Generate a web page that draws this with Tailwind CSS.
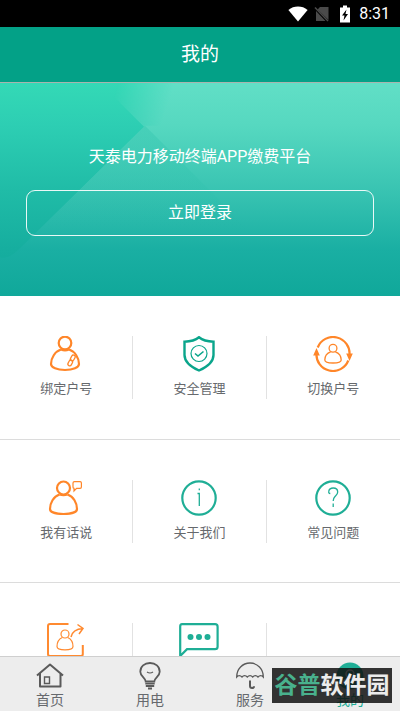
<!DOCTYPE html>
<html lang="zh-CN">
<head>
<meta charset="utf-8">
<meta name="viewport" content="width=device-width, initial-scale=1">
<title>我的</title>
<script src="https://cdn.jsdelivr.net/npm/@tailwindcss/browser@4"></script>
</head>
<body class="h-screen flex flex-col overflow-hidden bg-white font-[Roboto,'Noto_Sans_CJK_SC',sans-serif] text-[#66696d]">

<div class="h-[27px] shrink-0 bg-black text-white flex items-center justify-end pr-[10px]">
  <svg class="w-5 h-4 mr-[6px]" viewBox="0 0 20 16" fill="#fff"><path d="M10 15.500 0.400 4Q4.600.6 10 .6T19.600 4Z"/></svg>
  <svg class="w-4 h-4 mr-[9px]" viewBox="0 0 16 16"><path d="M6 1h8.500v13L3.500 3.500ZM2 5l9.500 10H2Z" fill="#4a4a4a"/><path d="M1 1.500 14 15" stroke="#4a4a4a" stroke-width="1.500"/></svg>
  <svg class="w-3 h-[18px] mr-2" viewBox="0 0 12 18"><path d="M4 .5h4v2h3v15H1v-15h3Z" fill="#fff"/><path d="M7.500 4.500 3 10.500h2.500L4.500 15.500 9 9H6.500Z" fill="#000"/></svg>
  <span class="text-[16px] leading-5">8:31</span>
</div>

<header class="h-14 shrink-0 bg-[#03a187] border-b border-[#a9b3ad] flex items-center justify-center">
  <h1 class="text-[19px] leading-7 text-white">我的</h1>
</header>

<main class="flex-1 min-h-0 overflow-hidden">
  <section class="relative h-[213px] px-[26px] pt-[62px] text-white text-center bg-[#10a99b]">
    <svg class="absolute inset-0 w-full h-full" viewBox="0 0 400 214" preserveAspectRatio="none" aria-hidden="true">
      <defs>
        <linearGradient id="base" x1="0" y1="0" x2="0" y2="1"><stop offset="0" stop-color="#34d9b6"/><stop offset=".2" stop-color="#2dceb3"/><stop offset=".5" stop-color="#20bca7"/><stop offset=".78" stop-color="#16ae9f"/><stop offset="1" stop-color="#10a89a"/></linearGradient>
        <linearGradient id="facet" gradientUnits="userSpaceOnUse" x1="0" y1="0" x2="0" y2="214"><stop offset="0" stop-color="#61dfc6"/><stop offset=".2" stop-color="#56d8c0"/><stop offset=".5" stop-color="#39c4b2"/><stop offset=".78" stop-color="#1aafa3"/><stop offset="1" stop-color="#10a89a"/></linearGradient>
        <linearGradient id="fade" gradientUnits="userSpaceOnUse" x1="118" y1="0" x2="175" y2="0" gradientTransform="skewX(-18)"><stop offset="0" stop-color="#fff" stop-opacity="0"/><stop offset="1" stop-color="#fff"/></linearGradient>
        <mask id="soft"><rect width="400" height="214" fill="url(#fade)"/></mask>
        <linearGradient id="end" gradientUnits="userSpaceOnUse" x1="0" y1="43" x2="0" y2="150"><stop offset="0" stop-color="#2dc2ac" stop-opacity=".35"/><stop offset=".4" stop-color="#2dc2ac" stop-opacity=".25"/><stop offset="1" stop-color="#20b5a4" stop-opacity="0"/></linearGradient>
      </defs>
      <path d="M0 0H400V214H0Z" fill="url(#base)"/>
      <path d="M100 0H400V44H144Z" fill="url(#facet)" mask="url(#soft)"/>
      <path d="M145 43H400V214H0V175Q8 178 20 166Z" fill="url(#facet)"/>
      <path d="M145 43 252 150H38Z" fill="url(#end)"/>
    </svg>
    <div class="relative">
      <p class="text-[16px] leading-6">天泰电力移动终端APP缴费平台</p>
      <button type="button" class="mt-[21px] w-full h-[46px] rounded-[9px] border border-white/90 text-[16px] leading-6">立即登录</button>
    </div>
  </section>

  <div class="divide-y divide-[#dcdcdc] text-[13px] leading-5 [&_svg]:shrink-0">
    <div class="grid grid-cols-3 pt-10 h-[144px] divide-x divide-[#e2e2e2]">
      <a href="#bind" class="h-[63px] flex flex-col items-center gap-[7px]">
        <svg class="w-10 h-9" viewBox="0 0 40 36" fill="none" stroke="#ff8629" stroke-width="2.200"><circle cx="19" cy="7" r="6.300"/><path d="M15 13.500C9 15.500 5 22 5 28c0 3.500 6 6 14 6s14-2.500 14-6c0-6-4-12.500-10-14.500"/><path d="M15 13.500q4 1.600 8 0"/><g stroke-width="1.300"><rect x="25" y="19" width="3.600" height="6" rx="1.800" transform="rotate(28 27 22)"/><rect x="22.400" y="23.800" width="3.600" height="6" rx="1.800" transform="rotate(28 24 27)"/></g></svg>
        <span>绑定户号</span>
      </a>
      <a href="#security" class="h-[63px] flex flex-col items-center gap-[7px]">
        <svg class="w-10 h-9" viewBox="0 0 40 36" fill="none" stroke="#0aa58b"><path d="M20 1.200C16 4.500 11 5.500 5.500 5.700V19C5.500 26.500 12 31 20 34.500 28 31 34.500 26.500 34.500 19V5.700C29 5.500 24 4.500 20 1.200Z" stroke-width="2.400"/><circle cx="20" cy="17.500" r="8" stroke-width="1.200"/><path d="m16 17.500 3 2.500 5.500-4.500" stroke-width="1.600"/></svg>
        <span>安全管理</span>
      </a>
      <a href="#switch" class="h-[63px] flex flex-col items-center gap-[7px]">
        <svg class="w-10 h-9" viewBox="0 0 40 36" fill="none" stroke="#ff8629" stroke-width="2.200"><path d="M4.700 11.500A16.500 16.500 0 0 1 36.500 19M35.300 24.500A16.500 16.500 0 0 1 3.500 17"/><path d="M.2 19.500 3.500 12l3.300 7.500ZM33.200 17.500h6.600L36.500 25Z" fill="#ff8629" stroke="none"/><g stroke-width="1.300"><circle cx="20" cy="12.200" r="3.900"/><path d="M17.700 15.800C14 17 11.800 20.500 11.800 24c0 2 3.500 3 8.200 3s8.200-1 8.200-3c0-3.500-2.200-7-5.900-8.200"/></g></svg>
        <span>切换户号</span>
      </a>
    </div>
    <div class="grid grid-cols-3 pt-10 h-[143px] divide-x divide-[#e2e2e2]">
      <a href="#feedback" class="h-[63px] flex flex-col items-center gap-[7px]">
        <svg class="w-10 h-9" viewBox="0 0 40 36" fill="none" stroke="#ff8629" stroke-width="2.200"><circle cx="17.500" cy="8" r="6.500"/><path d="M13.500 14.500C7.500 16.500 4 23 4 29c0 3 5.500 5 13.500 5S31 32 31 29c0-6-3.500-12.500-9.500-14.500"/><path d="M13.500 14.500q4 1.400 8 0"/><path d="M28.500 1.700h5.600q1.300 0 1.300 1.300v4q0 1.300-1.300 1.300h-3.500L28 11V8.300q-1 0-1-1.300V3q0-1.300 1.500-1.300Z" stroke-width="1.200"/></svg>
        <span>我有话说</span>
      </a>
      <a href="#about" class="h-[63px] flex flex-col items-center gap-[7px]">
        <svg class="w-10 h-9" viewBox="0 0 40 36" fill="none" stroke="#1fae96"><circle cx="20" cy="18" r="16.700" stroke-width="2.200"/><path d="M18.500 13.500h1.800V26M20.300 8.500v1.800" stroke-width="1.300"/></svg>
        <span>关于我们</span>
      </a>
      <a href="#faq" class="h-[63px] flex flex-col items-center gap-[7px]">
        <svg class="w-10 h-9" viewBox="0 0 40 36" fill="none" stroke="#1fae96"><circle cx="20" cy="18" r="16.700" stroke-width="2.200"/><path d="M17.300 13.500c-1.700 0-1.700-1.500-1.500-2.300.4-2.200 2-3.200 4.400-3.200 2.800 0 4.500 1.700 4.500 4 0 2-1.200 3-2.500 4.300-1.500 1.500-2 2.500-2 4.700M20.200 23.500V27" stroke-width="1.300"/></svg>
        <span>常见问题</span>
      </a>
    </div>
    <div class="grid grid-cols-3 pt-10 h-[143px] divide-x divide-[#e2e2e2]">
      <a href="#share" aria-label="分享" class="h-[63px] flex flex-col items-center">
        <svg class="w-10 h-9" viewBox="0 0 40 36" fill="none" stroke="#ff8a30" stroke-width="2"><path d="M22.500 1H4Q2 1 2 3v28q0 2 2 2h31q1.800 0 1.800-2v-9"/><g stroke-width="1.200"><circle cx="19" cy="11" r="4"/><path d="M16.300 14.500C13 16 11 20 11 23.500c0 2.200 3 3.300 8 3.300s8-1.100 8-3.300c0-3.500-2-7.500-5.300-9"/><path d="M25 14C26 9 30 6 37 5.500M31.500 1.500 37 5.500l-4 5.500" stroke-width="1.500"/></g></svg>
      </a>
      <a href="#message" aria-label="消息" class="h-[63px] flex flex-col items-center">
        <svg class="w-10 h-9" viewBox="0 0 40 36" fill="none" stroke="#1fae96" stroke-width="2.200"><path d="M3 1.200h33q2.600 0 2.600 2.500v20q0 2.500-2.600 2.500H8L1.200 33V3.500q0-2.300 1.800-2.300Z"/><g fill="#1fae96" stroke="none"><circle cx="11.500" cy="14" r="3"/><circle cx="20" cy="14" r="3"/><circle cx="28.500" cy="14" r="3"/></g></svg>
      </a>
      <div class="h-[63px]"></div>
    </div>
  </div>
</main>

<nav class="relative shrink-0 h-[55px] pt-[5px] border-t border-[#cfcfcf] bg-[#ededed] grid grid-cols-4 text-[14px] leading-5">
  <a href="#home" class="flex flex-col items-center">
    <svg class="w-7 h-7" viewBox="0 0 28 28" fill="none" stroke="#5a5a5a" stroke-width="2"><path d="M1 13.500 14 2.500 27 13.500M4 11.500V24.500H24.500V11.500" stroke-linejoin="round"/><path d="M8.500 15h5v6.500h-5Z" stroke-width="1.400"/></svg>
    <span>首页</span>
  </a>
  <a href="#power" class="flex flex-col items-center">
    <svg class="w-7 h-7" viewBox="0 0 28 28" fill="none" stroke="#5a5a5a" stroke-width="1.800"><path d="M9.700 19.500C9.700 16 4.300 14.500 4.300 9.700 4.300 4.500 8.500 1 14 1s9.700 3.500 9.700 8.700c0 4.800-5.400 6.300-5.400 9.800Z"/><path d="M11 10q3 2 6 0" stroke-width="1.200"/><path d="M9.300 21.700h9.400M9.800 24h8.400M12 26.500h4"/></svg>
    <span>用电</span>
  </a>
  <a href="#service" class="flex flex-col items-center">
    <svg class="w-7 h-7" viewBox="0 0 28 28" fill="none" stroke="#5a5a5a" stroke-width="1.300"><path d="M.7 15C.7 7 6.500 1 14 1s13.300 6 13.300 14c-1.500-1.800-3.700-1.800-5.300 0-1.500-1.800-3.800-1.800-5.300 0-1.500-1.800-3.800-1.800-5.400 0-1.500-1.800-3.800-1.800-5.300 0-1.600-1.800-3.800-1.800-5.300 0Z"/><path d="M14 18.500V24q0 2 2 2t2-1.800" stroke-width="2"/></svg>
    <span>服务</span>
  </a>
  <a href="#mine" class="flex flex-col items-center text-[#1fae96]">
    <svg class="w-7 h-7" viewBox="0 0 28 28"><circle cx="14" cy="14" r="13.500" fill="#1fae96"/><g fill="none" stroke="#fff" stroke-width="1.500"><circle cx="14" cy="12" r="4"/><path d="M6.500 23c0-4 3-7 7.500-7s7.500 3 7.500 7"/></g></svg>
    <span>我的</span>
  </a>
  <div class="absolute right-2 bottom-2 w-[120px] h-[35px] bg-[#111]/85 flex items-center justify-center text-[23px] leading-8 font-bold text-[#ececec] whitespace-nowrap"><span class="text-[#49b18d]">谷普</span>软件园</div>
</nav>
</body>
</html>
